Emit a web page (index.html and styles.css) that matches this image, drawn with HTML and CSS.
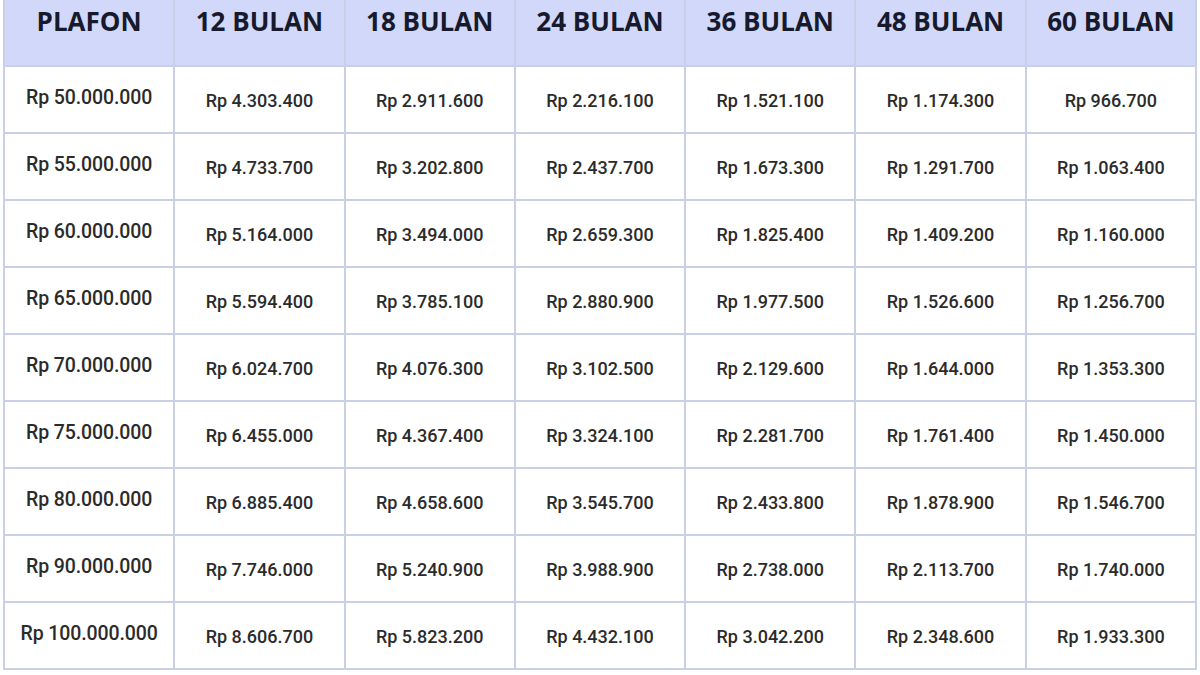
FILE: index.html
```html
<!DOCTYPE html>
<html lang="id">
<head>
<meta charset="utf-8">
<title>Tabel Angsuran</title>
<link rel="stylesheet" href="styles.css">
</head>
<body>
<div class="table">
  <div class="cell head">PLAFON</div>
  <div class="cell head">12 BULAN</div>
  <div class="cell head">18 BULAN</div>
  <div class="cell head">24 BULAN</div>
  <div class="cell head">36 BULAN</div>
  <div class="cell head">48 BULAN</div>
  <div class="cell head">60 BULAN</div>

  <div class="cell plafon">Rp 50.000.000</div><div class="cell">Rp 4.303.400</div><div class="cell">Rp 2.911.600</div><div class="cell">Rp 2.216.100</div><div class="cell">Rp 1.521.100</div><div class="cell">Rp 1.174.300</div><div class="cell">Rp 966.700</div>
  <div class="cell plafon">Rp 55.000.000</div><div class="cell">Rp 4.733.700</div><div class="cell">Rp 3.202.800</div><div class="cell">Rp 2.437.700</div><div class="cell">Rp 1.673.300</div><div class="cell">Rp 1.291.700</div><div class="cell">Rp 1.063.400</div>
  <div class="cell plafon">Rp 60.000.000</div><div class="cell">Rp 5.164.000</div><div class="cell">Rp 3.494.000</div><div class="cell">Rp 2.659.300</div><div class="cell">Rp 1.825.400</div><div class="cell">Rp 1.409.200</div><div class="cell">Rp 1.160.000</div>
  <div class="cell plafon">Rp 65.000.000</div><div class="cell">Rp 5.594.400</div><div class="cell">Rp 3.785.100</div><div class="cell">Rp 2.880.900</div><div class="cell">Rp 1.977.500</div><div class="cell">Rp 1.526.600</div><div class="cell">Rp 1.256.700</div>
  <div class="cell plafon">Rp 70.000.000</div><div class="cell">Rp 6.024.700</div><div class="cell">Rp 4.076.300</div><div class="cell">Rp 3.102.500</div><div class="cell">Rp 2.129.600</div><div class="cell">Rp 1.644.000</div><div class="cell">Rp 1.353.300</div>
  <div class="cell plafon">Rp 75.000.000</div><div class="cell">Rp 6.455.000</div><div class="cell">Rp 4.367.400</div><div class="cell">Rp 3.324.100</div><div class="cell">Rp 2.281.700</div><div class="cell">Rp 1.761.400</div><div class="cell">Rp 1.450.000</div>
  <div class="cell plafon">Rp 80.000.000</div><div class="cell">Rp 6.885.400</div><div class="cell">Rp 4.658.600</div><div class="cell">Rp 3.545.700</div><div class="cell">Rp 2.433.800</div><div class="cell">Rp 1.878.900</div><div class="cell">Rp 1.546.700</div>
  <div class="cell plafon">Rp 90.000.000</div><div class="cell">Rp 7.746.000</div><div class="cell">Rp 5.240.900</div><div class="cell">Rp 3.988.900</div><div class="cell">Rp 2.738.000</div><div class="cell">Rp 2.113.700</div><div class="cell">Rp 1.740.000</div>
  <div class="cell plafon">Rp 100.000.000</div><div class="cell">Rp 8.606.700</div><div class="cell">Rp 5.823.200</div><div class="cell">Rp 4.432.100</div><div class="cell">Rp 3.042.200</div><div class="cell">Rp 2.348.600</div><div class="cell">Rp 1.933.300</div>
</div>
</body>
</html>
```

FILE: styles.css
```css
html, body {
  margin: 0;
  padding: 0;
  background: #ffffff;
}

.table {
  box-sizing: border-box;
  width: 1194px;
  margin-left: 3px;
  display: grid;
  grid-template-columns: repeat(7, 1fr);
  grid-template-rows: 67px;
  grid-auto-rows: 67px;
  border-left: 2px solid #c9cfe6;
  font-family: Roboto, "Liberation Sans", sans-serif;
}

.cell {
  box-sizing: border-box;
  display: flex;
  align-items: center;
  justify-content: center;
  padding-top: 2px;
  border-right: 2px solid #c9cfe6;
  border-bottom: 2px solid #c9cfe6;
  font-size: 18px;
  font-weight: 500;
  color: #2b2b2b;
  letter-spacing: 0;
  background: #ffffff;
}

.cell.plafon {
  padding-top: 0;
  padding-bottom: 4px;
  font-size: 19.5px;
  letter-spacing: -0.1px;
}

.cell.head {
  align-items: flex-start;
  padding-top: 3px;
  padding-bottom: 0;
  background: #d1d8fa;
  font-family: "Open Sans", "Noto Sans", sans-serif;
  font-size: 26px;
  font-weight: 700;
  line-height: 36px;
  color: #161a2c;
  letter-spacing: 0;
}
```
